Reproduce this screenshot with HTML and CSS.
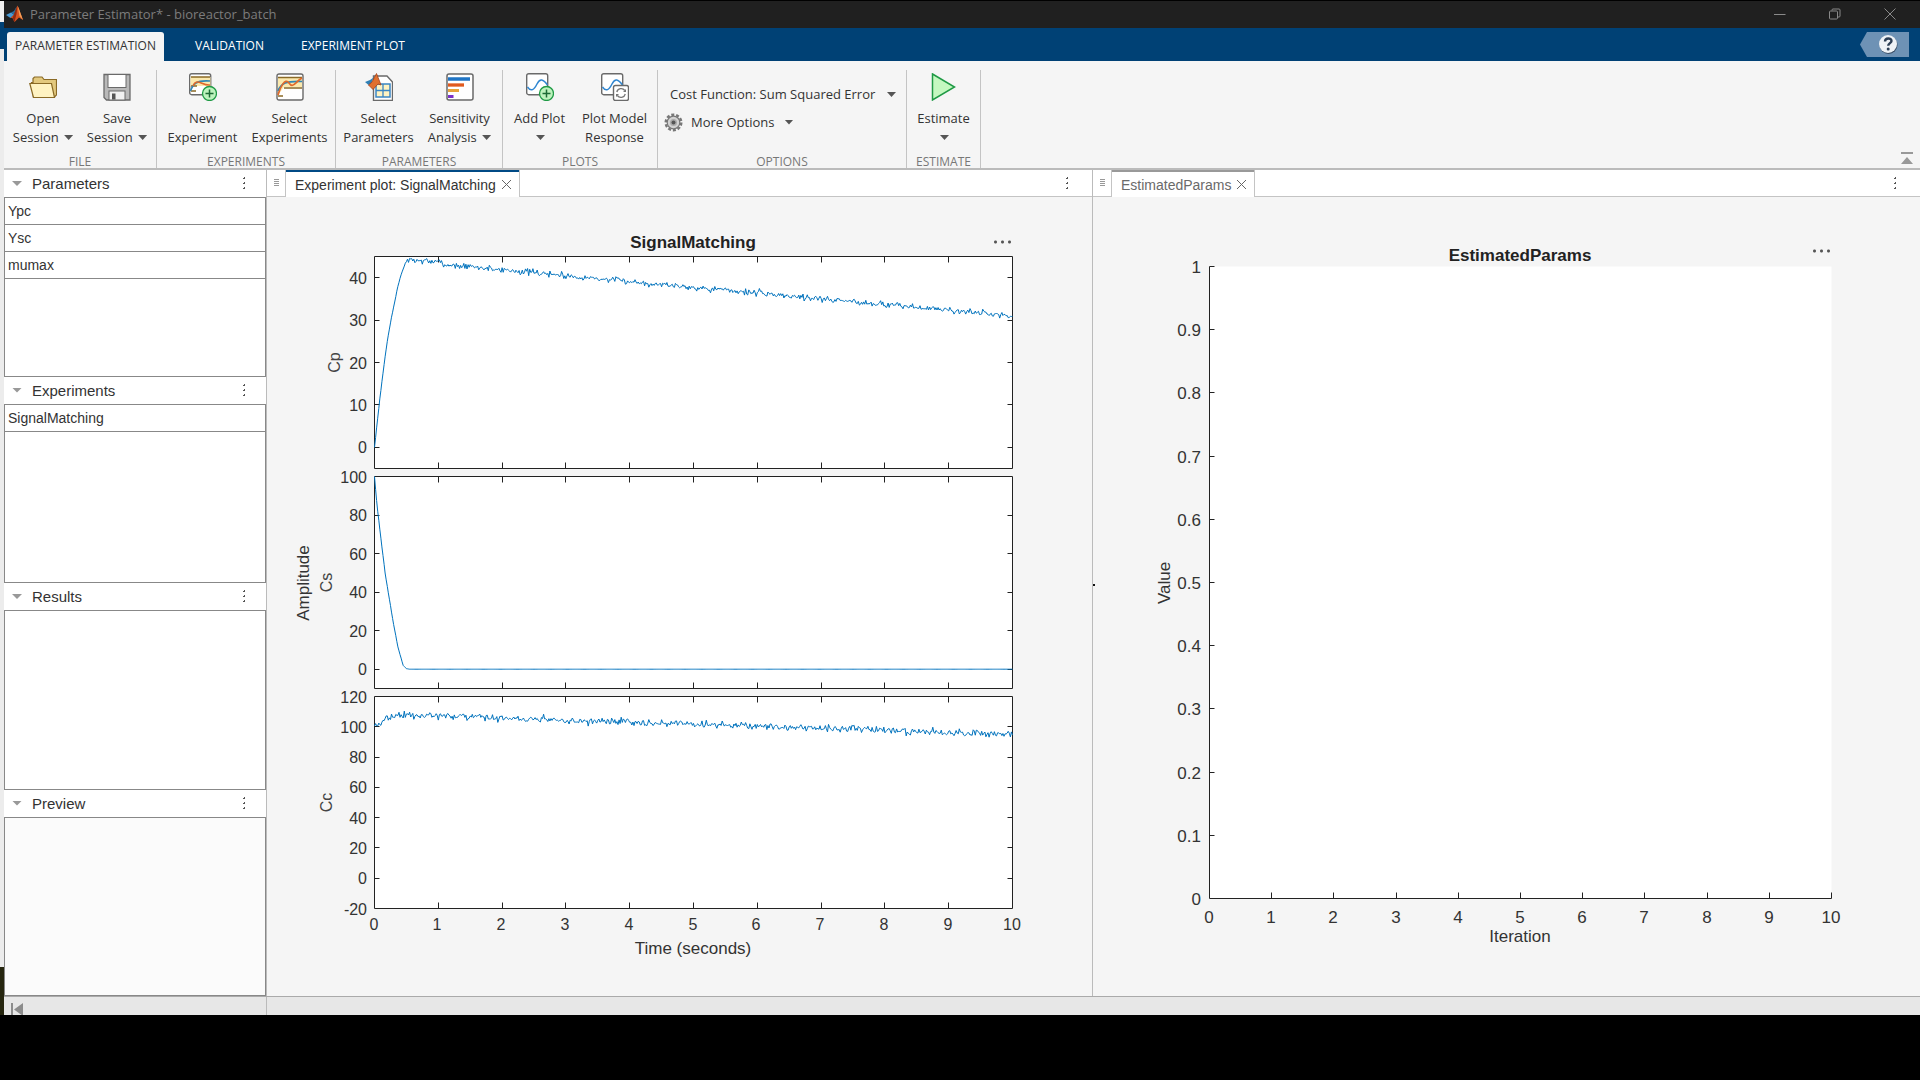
FILE: index.html
```html
<!DOCTYPE html>
<html lang="en">
<head>
<meta charset="utf-8">
<meta name="viewport" content="width=device-width, initial-scale=1">
<title>Parameter Estimator* - bioreactor_batch</title>
<link rel="stylesheet" href="styles.css">
</head>
<body>
<div class="edge"></div>
<div class="app">
  <header class="titlebar">
    <svg class="logo" viewBox="0 0 18 18" aria-hidden="true">
      <path d="M0 10 5 7.500 8 9.500 4.500 13z" fill="#4a9ad4"/>
      <path d="M5 7.500 8 6 11 1 8 9.500z" fill="#2d6f9f"/>
      <path d="M4.500 13 8 9.500 11.500 0.500 13 4 17 15 13 12.500 8.500 17 6.500 13z" fill="#d9541e"/>
      <path d="M11.500 0.500 13 4 17 15 13.500 11z" fill="#f3a05a"/>
      <path d="M8 9.500 11.500 0.500 10.500 9 8.500 17 6.500 13z" fill="#8e2a12"/>
    </svg>
    <h1 class="title">Parameter Estimator* - bioreactor_batch</h1>
    <div class="winbtns">
      <button class="winbtn" aria-label="Minimize"><svg width="14" height="14" viewBox="0 0 14 14"><path d="M1 7.500H12.500"/></svg></button>
      <button class="winbtn" aria-label="Restore"><svg width="14" height="14" viewBox="0 0 14 14"><rect x="1.500" y="4" width="8" height="8" rx="1"/><path d="M4 3.500V3a1 1 0 0 1 1-1h6a1 1 0 0 1 1 1v6a1 1 0 0 1-1 1h-1"/></svg></button>
      <button class="winbtn" aria-label="Close"><svg width="14" height="14" viewBox="0 0 14 14"><path d="M1.500 1.500 12.500 12.500M12.500 1.500 1.500 12.500"/></svg></button>
    </div>
  </header>

  <nav class="tabs">
    <button class="tab tab-on">PARAMETER ESTIMATION</button>
    <button class="tab">VALIDATION</button>
    <button class="tab">EXPERIMENT PLOT</button>
    <button class="help" aria-label="Help">
      <svg width="49" height="25" viewBox="0 0 49 25">
        <path d="M0 12.500 7 0H49V25H7z" fill="#6e92b5"/>
        <circle cx="28.500" cy="13" r="9" fill="#3b4f66"/>
        <circle cx="28" cy="12" r="9" fill="#eef2f6"/>
        <path d="M25 9.500c0-4 6.500-4 6.500-.5 0 2-3.300 2.400-3.300 4.800" fill="none" stroke="#2c3e55" stroke-width="2.400"/>
        <circle cx="28.200" cy="17" r="1.500" fill="#2c3e55"/>
      </svg>
    </button>
  </nav>

  <div class="strip">
    <section class="group">
      <div class="tools">
        <button class="tool w-s">
          <svg class="ico" viewBox="0 0 28 28"><path d="M4.500 24.500 2.500 9.500H4V5.500l1.500-1.500H13l2 2.500H27.500V22l-2.500 2.500z" fill="#e3c97e" stroke="#8a6a26" stroke-width="1.200"/><path d="M4.500 24.500 .8 10.500H22.500L25.500 24.500z" fill="#fff3c2" stroke="#8a6a26" stroke-width="1.200"/></svg>
          <span>Open<br>Session <i class="caret"></i></span>
        </button>
        <button class="tool w-s">
          <svg class="ico" viewBox="0 0 28 28"><path d="M1 1.500H27V27H3.500L1 24.500z" fill="#b9b9b9" stroke="#6a6a6a" stroke-width="1.300"/><rect x="5" y="1.500" width="18" height="13" fill="#fff" stroke="#6a6a6a"/><rect x="6" y="18" width="16" height="9" fill="#f2f2f2" stroke="#6a6a6a"/><rect x="9" y="20.500" width="3.500" height="6" fill="#555"/></svg>
          <span>Save<br>Session <i class="caret"></i></span>
        </button>
      </div>
      <h2 class="gname">FILE</h2>
    </section>

    <section class="group">
      <div class="tools">
        <button class="tool w-l">
          <svg class="ico" viewBox="0 0 28 28"><rect x=".7" y=".7" width="21" height="21" rx="2" fill="#fff" stroke="#6a6a6a" stroke-width="1.400"/><path d="M1.500 4H21.500V13H1.500z" fill="#fbe9ae"/><path d="M2 4H21M2 13H8M2 18H7" stroke="#8a6a26" stroke-width="1.300"/><path d="M1.500 18C4 11 7 7 21 8" fill="none" stroke="#2f86b5" stroke-width="1.600"/><path d="M4 13C8 4 13 13 21 12" fill="none" stroke="#e06a2b" stroke-width="1.600"/><path d="M9 14H21V21H9z" fill="#fff"/><circle cx="20.500" cy="20.500" r="7" fill="#bdf3bd" stroke="#1f9a45" stroke-width="1.300"/><path d="M20.500 16.500V24.500M16.500 20.500H24.500" stroke="#1c6b35" stroke-width="1.500"/></svg>
          <span>New<br>Experiment</span>
        </button>
        <button class="tool w-l">
          <svg class="ico" viewBox="0 0 28 28"><rect x="1" y="1" width="26" height="26" rx="2" fill="#fff" stroke="#6a6a6a" stroke-width="1.400"/><path d="M2 4.500H26V14H8L2 22z" fill="#fbe9ae"/><path d="M2 4.500H26M8 15H26M2 23H7" stroke="#8a6a26" stroke-width="1.300"/><path d="M2 18C5 10 10 8 26 8.500" fill="none" stroke="#2f86b5" stroke-width="1.700"/><path d="M2 22C4 15 9 4 13 10s6-1 13-5" fill="none" stroke="#e06a2b" stroke-width="1.700"/><path d="M9 16H26V26H9z" fill="#fff"/></svg>
          <span>Select<br>Experiments</span>
        </button>
      </div>
      <h2 class="gname">EXPERIMENTS</h2>
    </section>

    <section class="group">
      <div class="tools">
        <button class="tool w-m">
          <svg class="ico" viewBox="0 0 28 28"><path d="M8.500 3H22l5.500 6V27.500H8.500z" fill="#fff" stroke="#6a6a6a" stroke-width="1.400"/><rect x="11" y="11" width="14" height="13" fill="#fff3c2" stroke="#3b86c4" stroke-width="1.500"/><path d="M18 11V24M11 17.500H25" stroke="#3b86c4" stroke-width="1.300"/><path d="M0 9 5 7 8 5 10 1 6 11 3.500 12z" fill="#2f7fb5"/><path d="M3.500 12 7 9 11.500 .5 16 12 13 11 8 16.500z" fill="#e0702f" stroke="#a3401a" stroke-width=".8"/></svg>
          <span>Select<br>Parameters</span>
        </button>
        <button class="tool w-m">
          <svg class="ico" viewBox="0 0 28 28"><rect x="1" y="1" width="26" height="26" rx="2" fill="#fff" stroke="#6a6a6a" stroke-width="1.500"/><path d="M2 6H24" stroke="#1f74c4" stroke-width="3.500"/><path d="M2 12H18" stroke="#e05a1f" stroke-width="3.300"/><path d="M2 17.500H13" stroke="#e8a33a" stroke-width="3"/><path d="M2 23.500H7.500" stroke="#7a2fc9" stroke-width="3"/></svg>
          <span>Sensitivity<br>Analysis <i class="caret"></i></span>
        </button>
      </div>
      <h2 class="gname">PARAMETERS</h2>
    </section>

    <section class="group">
      <div class="tools">
        <button class="tool w-xs">
          <svg class="ico" viewBox="0 0 28 28"><rect x=".7" y=".7" width="21" height="21" rx="2" fill="#fff" stroke="#6a6a6a" stroke-width="1.400"/><path d="M1.500 14C5 19 8 17 11 11s6-5 10.500 1" fill="none" stroke="#2f86d1" stroke-width="1.500"/><circle cx="20.500" cy="20.500" r="7" fill="#bdf3bd" stroke="#1f9a45" stroke-width="1.300"/><path d="M20.500 16.500V24.500M16.500 20.500H24.500" stroke="#1c6b35" stroke-width="1.500"/></svg>
          <span>Add Plot<br><i class="caret"></i></span>
        </button>
        <button class="tool w-m">
          <svg class="ico" viewBox="0 0 28 28"><rect x=".7" y=".7" width="21" height="21" rx="2" fill="#fff" stroke="#6a6a6a" stroke-width="1.400"/><path d="M1.500 14C5 19 8 17 11 11s6-5 10.500 1" fill="none" stroke="#2f86d1" stroke-width="1.500"/><rect x="12.500" y="12.500" width="15" height="15" rx="2" fill="#fff" stroke="#6a6a6a" stroke-width="1.400"/><path d="M15.800 19a4.500 4.500 0 0 1 8-1.500M24.300 21a4.500 4.500 0 0 1-8 1.500" fill="none" stroke="#777" stroke-width="1.300"/><path d="M25 16V19H22zM15 24V21H18z" fill="#777"/></svg>
          <span>Plot Model<br>Response</span>
        </button>
      </div>
      <h2 class="gname">PLOTS</h2>
    </section>

    <section class="group group-opts">
      <div class="opts">
        <label class="cost"><select aria-label="Cost function"><option>Cost Function: Sum Squared Error</option></select><i class="caret"></i></label>
        <button class="more">
          <svg width="19" height="19" viewBox="0 0 19 19"><circle cx="9.500" cy="9.500" r="7.800" fill="none" stroke="#777" stroke-width="2.400" stroke-dasharray="3 1.900"/><circle cx="9.500" cy="9.500" r="6.300" fill="#d2d2d2" stroke="#777" stroke-width="1.200"/><circle cx="9.500" cy="9.500" r="3.500" fill="#aaa"/><circle cx="9.500" cy="9.500" r="2" fill="#555"/></svg>
          <span>More Options</span><i class="caret"></i>
        </button>
      </div>
      <h2 class="gname">OPTIONS</h2>
    </section>

    <section class="group">
      <div class="tools">
        <button class="tool w-xs">
          <svg class="ico" viewBox="0 0 28 28"><path d="M2.500 1 24.500 14 2.500 27z" fill="#c4f8c0" stroke="#1f9a45" stroke-width="1.500"/></svg>
          <span>Estimate<br><i class="caret"></i></span>
        </button>
      </div>
      <h2 class="gname">ESTIMATE</h2>
    </section>

    <button class="collapse" aria-label="Collapse toolstrip"><svg width="12" height="12" viewBox="0 0 12 12"><path d="M0 0H12V2H0zM6 5 12 12H0z" fill="#999"/></svg></button>
  </div>

  <main class="work">
    <aside class="side">
      <section class="panel">
        <header class="phead"><button class="fold" aria-label="Collapse Parameters"></button><h2>Parameters</h2><button class="kebab" aria-label="Parameters menu"></button></header>
        <ul class="pbox"><li>Ypc</li><li>Ysc</li><li>mumax</li></ul>
      </section>
      <section class="panel">
        <header class="phead"><button class="fold" aria-label="Collapse Experiments"></button><h2>Experiments</h2><button class="kebab" aria-label="Experiments menu"></button></header>
        <ul class="pbox"><li>SignalMatching</li></ul>
      </section>
      <section class="panel">
        <header class="phead"><button class="fold" aria-label="Collapse Results"></button><h2>Results</h2><button class="kebab" aria-label="Results menu"></button></header>
        <div class="pbox"></div>
      </section>
      <section class="panel">
        <header class="phead"><button class="fold" aria-label="Collapse Preview"></button><h2>Preview</h2><button class="kebab" aria-label="Preview menu"></button></header>
        <div class="pbox pbox-dim"></div>
      </section>
    </aside>

    <section class="doc">
      <header class="dtabs">
        <i class="grip"></i>
        <div class="dtab dtab-on"><span>Experiment plot: SignalMatching</span><button class="x" aria-label="Close tab"><svg width="9" height="9" viewBox="0 0 9 9"><path d="M0 0 9 9M9 0 0 9"/></svg></button></div>
        <div class="dfill"><button class="kebab" aria-label="Document menu"></button></div>
      </header>
      <div class="canvas">
        <svg id="signals" class="plot" viewBox="0 1 825 799"></svg>
        <button class="dots dots-a" aria-label="Axes menu"></button>
      </div>
    </section>

    <section class="doc doc-right">
      <header class="dtabs">
        <i class="grip"></i>
        <div class="dtab"><span>EstimatedParams</span><button class="x" aria-label="Close tab"><svg width="9" height="9" viewBox="0 0 9 9"><path d="M0 0 9 9M9 0 0 9"/></svg></button></div>
        <div class="dfill"><button class="kebab" aria-label="Document menu"></button></div>
      </header>
      <div class="canvas">
        <svg id="params" class="plot" viewBox="0 1 827 799"></svg>
        <button class="dots dots-b" aria-label="Axes menu"></button>
      </div>
    </section>
  </main>

  <footer class="status">
    <div class="status-side"><button class="rewind" aria-label="Collapse side panel"><svg width="12" height="13" viewBox="0 0 12 13"><path d="M0 0H2V13H0zM12 0V13L3 6.500z" fill="#8c8c8c"/></svg></button></div>
  </footer>
</div>
<script src="plots.js"></script>
</body>
</html>
```
FILE: styles.css
```css
* { box-sizing: border-box; }

body {
  margin: 0;
  min-height: 100vh;
  display: flex;
  padding: 1px 0 65px;
  background: #000;
  color: #333;
  font-family: "Liberation Sans", Arial, sans-serif;
  font-size: 14px;
}

button, select {
  margin: 0;
  padding: 0;
  border: 0;
  background: none;
  color: inherit;
  font: inherit;
}

h1, h2 { margin: 0; font-weight: 400; }
ul { margin: 0; padding: 0; list-style: none; }
svg { display: block; }

.edge {
  flex: none;
  width: 4px;
  background: linear-gradient(#f0f0f0 0 21px, #004175 21px 48px, #ececec 48px 966px, #26260f 966px);
}

.app {
  flex: 1;
  min-width: 0;
  display: flex;
  flex-direction: column;
  background: #f5f5f5;
}

/* title bar */
.titlebar {
  height: 27px;
  display: flex;
  align-items: center;
  padding-bottom: 1px;
  background: #202020;
  color: #7c7c7c;
}
.logo { width: 18px; height: 18px; margin-left: 2px; }
.title { margin-left: 6px; font: 13px/20px "Open Sans", sans-serif; }
.winbtns { margin-left: auto; display: flex; gap: 41px; padding-right: 23px; }
.winbtn svg { fill: none; stroke: #8a8a8a; stroke-width: 1; }

/* toolstrip tabs */
.tabs {
  height: 33px;
  display: flex;
  align-items: flex-end;
  padding-left: 3px;
  background: #004175;
}
.tab {
  height: 29px;
  padding: 0 31px 2px;
  color: #fff;
  font: 12px/20px "Open Sans", sans-serif;
}
.tab + .tab + .tab { padding: 0 6px 2px; }
.tab-on {
  padding: 0 8px 2px;
  border-radius: 3px 3px 0 0;
  background: #f5f5f5;
  color: #333;
}
.help { align-self: center; margin-left: auto; margin-right: 11px; }

/* toolstrip */
.strip {
  height: 109px;
  display: flex;
  padding-top: 9px;
  border-bottom: 2px solid #bbb;
  font-family: "Open Sans", sans-serif;
}
.group {
  display: flex;
  flex-direction: column;
  justify-content: space-between;
  border-right: 1px solid #c4c4c4;
}
.tools { display: flex; padding: 3px 2px 0; }
.tool {
  display: flex;
  flex-direction: column;
  align-items: center;
  gap: 8px;
  font-size: 13px;
  line-height: 19px;
  white-space: nowrap;
}
.ico { width: 28px; height: 28px; }
.w-xs { width: 69px; }
.w-s { width: 74px; }
.w-m { width: 81px; }
.w-l { width: 87px; }
.gname { color: #777; font-size: 12px; line-height: 13px; text-align: center; }
.caret {
  display: inline-block;
  width: 9px;
  height: 5px;
  margin-left: 2px;
  vertical-align: 2px;
  background: #555;
  clip-path: polygon(0 0, 100% 0, 50% 100%);
}
.group-opts { width: 249px; }
.opts {
  display: flex;
  flex-direction: column;
  align-items: flex-start;
  gap: 8px;
  padding: 14px 0 0 6px;
  font-size: 13px;
  line-height: 20px;
}
.cost { position: relative; width: 233px; height: 20px; padding-left: 6px; }
.cost select { width: 100%; height: 20px; appearance: none; }
.cost .caret { position: absolute; right: 1px; top: 8px; pointer-events: none; }
.more { display: flex; align-items: center; gap: 8px; }
.collapse { align-self: flex-end; margin: 0 7px 4px auto; }

/* work area */
.work {
  flex: 1;
  display: grid;
  grid-template-columns: 263px minmax(0, 826fr) minmax(0, 827fr);
}
.side {
  display: grid;
  grid-template-rows: repeat(4, minmax(0, 1fr));
  border-right: 1px solid #bbb;
}
.panel { display: flex; flex-direction: column; background: #fff; }
.phead {
  height: 27px;
  display: flex;
  align-items: center;
  padding: 0 17px 0 8px;
}
.phead h2 { flex: 1; margin-left: 10px; font-size: 15px; line-height: 21px; }
.fold {
  width: 10px;
  height: 5px;
  background: #999;
  clip-path: polygon(0 0, 100% 0, 50% 100%);
}
.kebab {
  width: 9px;
  height: 15px;
  background: radial-gradient(circle, #555 1px, transparent 1px) 0 0 / 9px 5px;
}
.pbox { flex: 1; border: 1px solid #888; }
.pbox-dim { background: #fbfbfb; }
.pbox li {
  padding: 0 3px;
  border-bottom: 1px solid #888;
  line-height: 26px;
}

.doc { display: flex; flex-direction: column; border-right: 1px solid #bbb; }
.doc-right { border-right: 0; }
.dtabs { height: 27px; display: flex; background: #fff; }
.grip {
  width: 19px;
  border: solid #c4c4c4;
  border-width: 0 1px 1px 0;
  background: repeating-linear-gradient(#999 0 1px, transparent 1px 2px) 7px 9px / 5px 8px no-repeat;
}
.dtab {
  display: flex;
  align-items: center;
  gap: 6px;
  padding: 0 8px 0 9px;
  border-top: 2px solid #999;
  color: #6a6a6a;
}
.dtab-on { border-color: #004a85; color: #333; }
.x svg { fill: none; stroke: #666; stroke-width: 1; }
.dfill {
  flex: 1;
  display: flex;
  align-items: center;
  justify-content: flex-end;
  padding-right: 20px;
  border: solid #c4c4c4;
  border-width: 0 0 1px 1px;
}
.canvas { position: relative; flex: 1; }
.doc-right .canvas::before {
  content: "";
  position: absolute;
  left: 0;
  top: calc(50% - 13px);
  width: 2px;
  height: 2px;
  background: #111;
}
.plot { width: 100%; height: 100%; }
.dots {
  position: absolute;
  width: 21px;
  height: 8px;
  background: radial-gradient(circle, #555 1px, transparent 2px) 0 0 / 7px 8px;
}
.dots-a { right: 79px; top: 41px; }
.dots-b { right: 88px; top: 50px; }

.axes { fill: none; stroke: #222; }
.face { fill: #fff; }
.trace { fill: none; stroke: #0072bd; stroke-width: 1; }
.plot text { fill: #333; text-anchor: middle; }
.plot .tick { font-size: 16px; }
.plot .tick-lg { font-size: 17px; }
.plot .ylab { text-anchor: end; }
.plot .name { font-size: 17px; }
.plot .sub { font-size: 16px; fill: #444; }
.plot .head { font-size: 17px; font-weight: 700; fill: #222; }

.status {
  height: 19px;
  display: flex;
  overflow: hidden;
  border-top: 1px solid #aaa;
  background: #e7e7e7;
}
.status-side { width: 263px; padding: 6px 0 0 7px; border-right: 1px solid #bbb; }
```
FILE: plots.js
```js
const NS = 'http://www.w3.org/2000/svg';

function add(svg, name, attrs, text) {
  const el = document.createElementNS(NS, name);
  for (const key in attrs) el.setAttribute(key, attrs[key]);
  if (text !== undefined) el.textContent = text;
  svg.appendChild(el);
}

function label(svg, cls, x, y, text, turned) {
  const attrs = { class: cls, x, y };
  if (turned) attrs.transform = `rotate(-90 ${x} ${y})`;
  add(svg, 'text', attrs, text);
}

// Repeatable noise, so that the traces look the same on every load.
let seed = 7;
function noise() {
  let sum = 0;
  for (let i = 0; i < 4; i++) {
    seed = (seed * 1664525 + 1013904223) % 4294967296;
    sum += seed / 4294967296 - 0.5;
  }
  return sum;
}

function interpolate(points, t) {
  for (let i = 1; i < points.length; i++) {
    const [t0, v0] = points[i - 1];
    const [t1, v1] = points[i];
    if (t <= t1) return v0 + (v1 - v0) * (t - t0) / (t1 - t0);
  }
  return points[points.length - 1][1];
}

const snap = v => Math.floor(v) + 0.5;
const signals = document.getElementById('signals');
const L = 107.5, R = 745.5, stepX = (R - L) / 10;

const charts = [
  { top: 60.5, min: -5, max: 45, ticks: [0, 10, 20, 30, 40], name: 'Cp', nameX: 73, amp: 0.65,
    points: [[0, 0], [0.08, 11], [0.15, 19.5], [0.2, 25], [0.26, 30.2], [0.32, 34.5], [0.36, 37.6], [0.41, 40.4], [0.49, 43.7], [0.55, 44.2], [1, 43.7], [1.1, 43.1], [2, 41.9], [3, 40.5], [4, 39.1], [8, 33.7], [10, 31]] },
  { top: 280.5, min: -10, max: 100, ticks: [0, 20, 40, 60, 80, 100], name: 'Cs', nameX: 65, amp: 0,
    points: [[0, 100], [0.02, 92], [0.05, 82], [0.1, 68], [0.17, 49], [0.29, 25], [0.37, 11], [0.45, 2], [0.5, 0.3], [0.55, 0], [10, 0]] },
  { top: 500.5, min: -20, max: 120, ticks: [-20, 0, 20, 40, 60, 80, 100, 120], name: 'Cc', nameX: 65, amp: 2,
    points: [[0, 100.5], [0.1, 102.5], [0.22, 105.5], [0.4, 107.5], [0.55, 108], [1, 107], [4, 103], [10, 95]] }
];

for (const c of charts) {
  const height = 212, bottom = c.top + height;
  const toY = v => bottom - (v - c.min) / (c.max - c.min) * height;
  add(signals, 'rect', { class: 'face', x: L, y: c.top, width: R - L, height });
  let d = `M${L} ${c.top}H${R}V${bottom}H${L}Z`;
  for (let i = 1; i < 10; i++) {
    const x = snap(L + i * stepX);
    d += `M${x} ${c.top}v6M${x} ${bottom}v-6`;
  }
  for (const v of c.ticks) {
    const y = snap(toY(v));
    if (y > c.top && y < bottom) d += `M${L} ${y}h5M${R} ${y}h-5`;
    label(signals, 'tick ylab', 100, Math.round(toY(v)) + 6, v);
  }
  add(signals, 'path', { class: 'axes', d });
  let trace = '';
  for (let i = 0; i <= 600; i++) {
    const t = i / 60;
    const v = interpolate(c.points, t) + (t > 0 && (t > 0.5 || c.max === 120) ? noise() * c.amp : 0);
    trace += `${i ? 'L' : 'M'}${(L + t * stepX).toFixed(1)} ${Math.max(c.top, toY(v)).toFixed(1)}`;
  }
  add(signals, 'path', { class: 'trace', d: trace });
  label(signals, 'sub', c.nameX, c.top + 106, c.name, true);
}
for (let i = 0; i <= 10; i++) label(signals, 'tick', Math.round(L + i * stepX) - 1, 734, i);
label(signals, 'head', 426, 52, 'SignalMatching');
label(signals, 'name', 426, 758, 'Time (seconds)');
label(signals, 'name', 42, 387, 'Amplitude', true);

const params = document.getElementById('params');
add(params, 'rect', { class: 'face', x: 116.5, y: 70.5, width: 622, height: 632 });
let axes = 'M116.5 70.5V702.5H738.5';
for (let i = 0; i <= 10; i++) {
  const x = snap(116.5 + i * 62.2), y = snap(702.5 - i * 63.2);
  if (i) axes += `M${x} 702.5v-6M116.5 ${y}h5`;
  label(params, 'tick-lg', Math.round(x) - 1, 727, i);
  label(params, 'tick-lg ylab', 108, Math.round(y) + 6, i === 0 || i === 10 ? i / 10 : (i / 10).toFixed(1));
}
add(params, 'path', { class: 'axes', d: axes });
label(params, 'head', 427, 65, 'EstimatedParams');
label(params, 'name', 427, 746, 'Iteration');
label(params, 'name', 77, 387, 'Value', true);
```
